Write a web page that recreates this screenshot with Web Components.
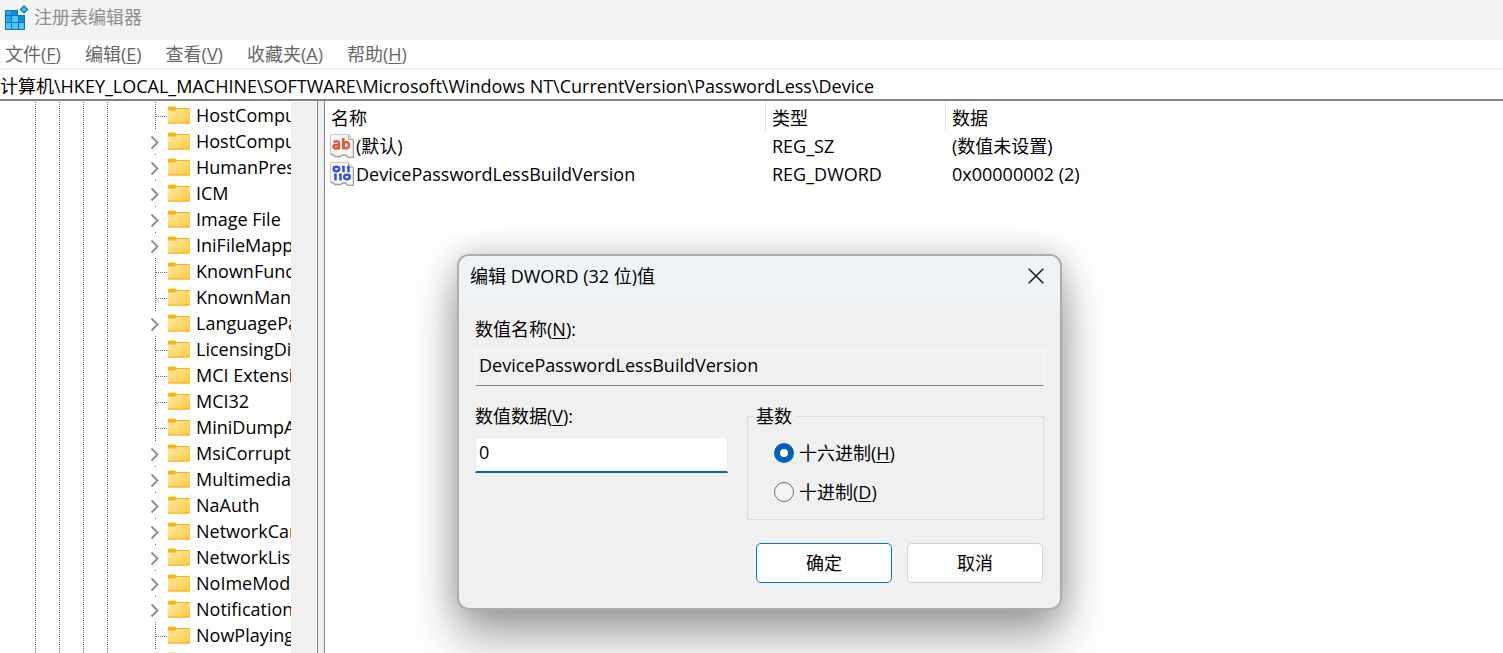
<!DOCTYPE html>
<html lang="zh-CN">
<head>
<meta charset="utf-8">
<title>注册表编辑器</title>
<style>
  html, body { margin: 0; height: 100%; }
  body {
    font: 18px/26px "Open Sans", "Noto Sans CJK SC", sans-serif;
    color: #000; background: #fff; overflow: hidden;
  }
</style>
</head>
<body>
<registry-editor></registry-editor>

<script>
const define = (name, html, setup) => {
  const template = document.createElement('template');
  template.innerHTML = html;
  customElements.define(name, class extends HTMLElement {
    connectedCallback() {
      if (this.shadowRoot) return;
      const root = this.attachShadow({ mode: 'open' });
      root.append(template.content.cloneNode(true));
      if (setup) setup(this, root);
    }
  });
};

/* Title bar */
define('title-bar', `
<style>
  :host { display: flex; align-items: center; gap: 5px; height: 40px; box-sizing: border-box;
    padding: 0 4px 6px; background: #f3f3f3; color: #8e8e8e; }
  svg { width: 25px; height: 25px; flex: none; }
</style>
<svg viewBox="0 0 25 25" aria-hidden="true">
  <path d="M1 5h13v5h7v15H1z" fill="#0a78b8"/>
  <g fill="#4cc6f8">
    <path d="M8 11h6v6H8zM2 18h5v6H2zM15 18h5v6h-5zM8 18h6v6H8z"/>
  </g>
  <g fill="#22aaea"><path d="M2 6h5v4H2zM2 11h5v6H2z"/></g>
  <g fill="#0c90d2"><path d="M8 6h5v4H8zM15 11h5v6h-5z"/></g>
  <path d="M20 0l4.500 4.500L20 9l-4.500-4.500z" fill="#1482bd"/>
  <path d="M20 2l2.500 2.500L20 7l-2.500-2.500z" fill="#4fb8e6"/>
</svg>
<slot></slot>`);

/* Menu */
define('menu-bar', `
<style>
  :host { display: flex; gap: 24px; height: 28px; padding-left: 5px; background: #fff; border-bottom: 2px solid #f0f0f0; }
</style>
<slot></slot>`);

define('menu-entry', `
<style>
  :host { display: block; }
  button { all: unset; color: #666; font: inherit; line-height: 28px; white-space: nowrap; }
  u { text-underline-offset: 2px; text-decoration-thickness: 1px; }
</style>
<button type="button"><slot></slot>(<u></u>)</button>`,
(host, root) => { root.querySelector('u').textContent = host.getAttribute('key'); });

/* Address line */
define('address-bar', `
<style>
  :host { display: block; padding-top: 1px; border-bottom: 2px solid #838088; }
  input { display: block; width: 100%; box-sizing: border-box; border: 0; padding: 0; height: 28px;
    font: inherit; color: #000; background: #fff; outline: 0; }
</style>
<input type="text" aria-label="地址" value="计算机\\HKEY_LOCAL_MACHINE\\SOFTWARE\\Microsoft\\Windows NT\\CurrentVersion\\PasswordLess\\Device">`);

/* Tree row: four ancestor guides, an empty level, the expander and the folder */
define('tree-row', `
<style>
  :host { display: flex; height: 26px; align-items: center; padding-left: 23px; white-space: nowrap;
    --dots: repeating-linear-gradient(#6a6a6a 0 1px, transparent 1px 2px); }
  i { flex: none; width: 24px; height: 26px; background: var(--dots) 12px 0 / 1px 100% no-repeat; }
  i.empty { background: none; }
  i.node { background: var(--dots) 12px 0 / 1px 100% no-repeat,
    repeating-linear-gradient(90deg, #6a6a6a 0 1px, transparent 1px 2px) 13px 14px / 11px 1px no-repeat; }
  :host([expandable]) i.node { background: linear-gradient(#6a6a6a, #6a6a6a) 12px 0 / 1px 1px no-repeat; }
  .chevron { display: none; width: 24px; height: 26px; }
  :host([expandable]) .chevron { display: block; }
  .folder { flex: none; width: 22px; height: 18px; margin: 0 6px 0 1px; }
</style>
<i></i><i></i><i></i><i></i><i class="empty"></i>
<i class="node"><svg class="chevron" viewBox="0 0 24 26"><path d="M8.500 8.500l6 6-6 6" fill="none" stroke="#8c8c8c" stroke-width="1.800"/></svg></i>
<svg class="folder" viewBox="0 0 22 18">
  <defs><linearGradient id="g" x1="0" y1="0" x2="1" y2="1"><stop offset="0" stop-color="#ffe9a6"/><stop offset="1" stop-color="#fec93c"/></linearGradient></defs>
  <path d="M0 2q0-1.500 1.500-1.500h5.500q1 0 1.500 1.500H22v4H0z" fill="#f7b416"/>
  <path d="M0 4.500h7l1.500-1.500H22v14q0 .5-.5.5H.5q-.5 0-.5-.5z" fill="url(#g)"/>
  <path d="M0 16.500h22v.5q0 .5-.5.5H.5q-.5 0-.5-.5z" fill="#efae1c"/>
</svg>
<slot></slot>`);

define('key-tree', `
<style>
  :host { display: flex; width: 317px; box-sizing: border-box; overflow: hidden; }
  .rows { flex: 1; min-width: 0; overflow: hidden; padding-top: 1px; }
  .track { flex: none; width: 25px; margin: 1px 1px 0 0; background: #f0f0f0; }
</style>
<div class="rows"></div><div class="track"></div>`,
(host, root) => {
  const keys = ['HostComputeNetwork', '+HostComputeService', '+HumanPresence', '+ICM', '+Image File',
    '+IniFileMapping', 'KnownFunctionTable', 'KnownManagedDebugging', '+LanguagePack', 'LicensingDiag',
    'MCI Extensions', 'MCI32', 'MiniDumpAuxiliary', '+MsiCorruptedFile', '+Multimedia', '+NaAuth', '+NetworkCards',
    '+NetworkList', '+NoImeMode', '+Notifications', 'NowPlaying', '+NtVdm64'];
  const rows = root.querySelector('.rows');
  for (const key of keys) {
    const row = document.createElement('tree-row');
    row.toggleAttribute('expandable', key[0] === '+');
    row.textContent = key.replace('+', '');
    rows.append(row);
  }
});

/* Values of the selected key */
define('value-list', `
<style>
  :host { display: block; flex: 1; min-width: 0; padding-top: 1px; }
  table { width: 100%; table-layout: fixed; border-collapse: separate; border-spacing: 0; }
  .name { width: 441px; } .type { width: 180px; }
  th, td { font-weight: 400; text-align: left; padding: 0 6px; height: 28px; box-sizing: border-box; white-space: nowrap; }
  th { height: 30px; border-right: 1px solid #e5e5e5; padding-top: 2px; }
  th:last-child { border-right: 0; }
  td:first-child { padding-left: 5px; }
  td span { display: flex; align-items: center; gap: 2px; }
  svg { width: 24px; height: 24px; flex: none; }
</style>
<table>
  <colgroup><col class="name"><col class="type"><col></colgroup>
  <thead><tr><th>名称</th><th>类型</th><th>数据</th></tr></thead>
  <tbody>
    <tr><td><span>
      <svg viewBox="0 0 24 24" role="img" aria-label="字符串值">
        <path d="M.5.5h18l5 5v18h-5l-3-2.500h-3l-2 1.500H5L2.500 20.500h-2z" fill="#f7f7f7" stroke="#c9c9c9"/>
        <path d="M18.500.5v5h5" fill="#ddd" stroke="#b0b0b0"/>
        <path d="M.5 20.500h2L5 22.500h5.500l2-1.500h3l3 2.500h5V6" fill="none" stroke="#a0a0a0" stroke-width="1.500"/>
        <g fill="none" stroke="#dc5a3a" stroke-width="2.500">
          <path d="M3.500 8q5.500-2 5.500 1.500v6M9 11H6q-2.500 0-2.500 1.800t2.200 1.800Q8 14.600 9 13"/>
          <path d="M13.300 4v11.500"/><ellipse cx="16.200" cy="11.200" rx="2.800" ry="3.200"/>
        </g>
      </svg>(默认)</span></td><td>REG_SZ</td><td>(数值未设置)</td></tr>
    <tr><td><span>
      <svg viewBox="0 0 24 24" role="img" aria-label="二进制值">
        <path d="M.5.5h18l5 5v18h-5l-3-2.500h-3l-2 1.500H5L2.500 20.500h-2z" fill="#f7f7f7" stroke="#c9c9c9"/>
        <path d="M18.500.5v5h5" fill="#ddd" stroke="#b0b0b0"/>
        <path d="M.5 20.500h2L5 22.500h5.500l2-1.500h3l3 2.500h5V6" fill="none" stroke="#a0a0a0" stroke-width="1.500"/>
        <g fill="none" stroke="#3556dc" stroke-width="2.500">
          <ellipse cx="6.500" cy="7" rx="2.800" ry="2.200"/>
          <path d="M12 5h1.500v5.200M17 5h1.500v5.200M4 12.800h1.500v5.700M9 12.800h1.500v5.700"/>
          <ellipse cx="17" cy="15" rx="2.800" ry="2.200"/>
        </g>
      </svg>DevicePasswordLessBuildVersion</span></td><td>REG_DWORD</td><td>0x00000002 (2)</td></tr>
  </tbody>
</table>`);

/* Value editing window */
define('value-dialog', `
<style>
  :host { position: absolute; left: 457px; top: 254px; width: 605px; box-sizing: border-box;
    border: 2px solid #adadad; border-radius: 12px; background: #f0f0f0; overflow: hidden;
    box-shadow: 0 28px 48px rgba(0,0,0,.34), 0 0 32px rgba(0,0,0,.2); }
  * { box-sizing: border-box; }
  header { display: flex; align-items: center; justify-content: space-between; height: 44px;
    padding: 0 16px 4px 11px; background: #eef3f8; }
  button { font: inherit; color: #000; }
  .close { border: 0; padding: 0; background: none; width: 16px; height: 16px; }
  .close svg { display: block; }
  form { padding: 16px 16px 25px; }
  label { display: block; }
  u { text-underline-offset: 2px; text-decoration-thickness: 1px; }
  input[type=text] { display: block; width: 100%; height: 36px; margin-top: 8px; padding: 0 3px 6px;
    font: inherit; color: #000; background: #f0f0f0; border: 1px solid #fafafa;
    border-bottom-color: #858585; outline: 0; }
  #data { background: #fff; border-color: #e5e8ee; border-bottom: 2px solid #0067c0; }
  .columns { display: grid; grid-template-columns: 253px 1fr; gap: 19px; margin-top: 17px; }
  fieldset { margin: 0; min-width: 0; border: 1px solid #dcdcdc; padding: 4px 6px 8px; }
  legend { padding: 0 2px; }
  .option { display: flex; align-items: center; gap: 5px; height: 39px; padding-left: 20px; }
  input[type=radio] { appearance: none; width: 20px; height: 20px; margin: 0; border-radius: 50%;
    border: 1px solid #707070; background: #f5f5f5; }
  input[type=radio]:checked { border: 6px solid #005fb8; background: #fff; }
  footer { display: flex; justify-content: flex-end; gap: 15px; margin-top: 23px; padding-right: 1px; }
  footer button { width: 136px; height: 40px; border: 1px solid #d0d0d0; border-radius: 5px; background: #fdfdfd; padding: 0; }
  footer .default { border-color: #0078d4; }
</style>
<header><slot></slot>
  <button class="close" type="button" aria-label="关闭"><svg width="16" height="16" viewBox="0 0 16 16"><path d="M.7.7l14.600 14.600M15.300.7L.7 15.300" stroke="#1a1a1a" stroke-width="1.500"/></svg></button>
</header>
<form>
  <label for="name">数值名称(<u>N</u>):</label>
  <input type="text" id="name" readonly value="DevicePasswordLessBuildVersion">
  <div class="columns">
    <div>
      <label for="data">数值数据(<u>V</u>):</label>
      <input type="text" id="data" value="0">
    </div>
    <fieldset>
      <legend>基数</legend>
      <div class="option"><input type="radio" name="base" id="hex" checked><label for="hex">十六进制(<u>H</u>)</label></div>
      <div class="option"><input type="radio" name="base" id="dec"><label for="dec">十进制(<u>D</u>)</label></div>
    </fieldset>
  </div>
  <footer><button class="default" type="button">确定</button><button type="button">取消</button></footer>
</form>`);

define('registry-editor', `
<style>
  :host { display: flex; flex-direction: column; height: 100vh; overflow: hidden; position: relative; }
  title-bar, menu-bar, address-bar { flex: none; }
  main { flex: 1; min-height: 0; display: flex; }
  .splitter { flex: none; width: 8px; box-sizing: border-box; background: #f0f0f0;
    border: 1px solid #838088; border-width: 0 1px; }
</style>
<title-bar>注册表编辑器</title-bar>
<menu-bar>
  <menu-entry key="F">文件</menu-entry><menu-entry key="E">编辑</menu-entry><menu-entry key="V">查看</menu-entry>
  <menu-entry key="A">收藏夹</menu-entry><menu-entry key="H">帮助</menu-entry>
</menu-bar>
<address-bar></address-bar>
<main><key-tree></key-tree><div class="splitter"></div><value-list></value-list></main>
<value-dialog>编辑 DWORD (32 位)值</value-dialog>`);
</script>
</body>
</html>
